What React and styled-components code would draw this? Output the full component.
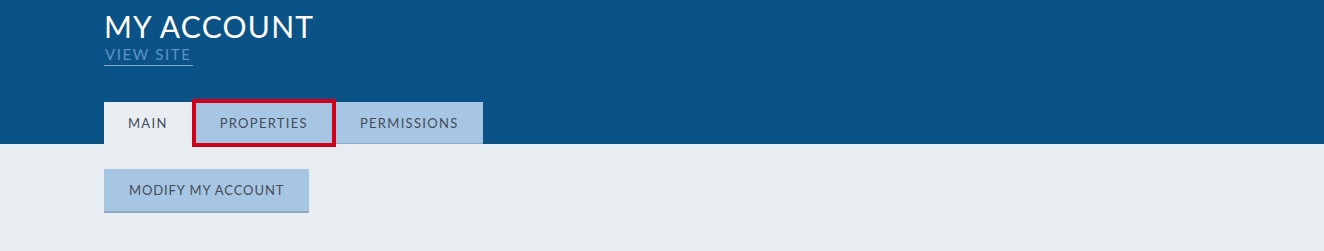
import React from "react";
import styled, { createGlobalStyle } from "styled-components";

const Global = createGlobalStyle`
  html, body {
    margin: 0;
    padding: 0;
    background: #e8edf2;
    font-family: "Lato", "Open Sans", sans-serif;
  }
  * { box-sizing: border-box; }
`;

const Header = styled.header`
  background: #0b5386;
  height: 144px;
  padding: 9px 0 0 104px;
  display: flex;
  flex-direction: column;
  align-items: flex-start;
`;

const Title = styled.h1`
  margin: 0;
  font-size: 30px;
  line-height: 35px;
  font-weight: 400;
  letter-spacing: 1.25px;
  color: #ffffff;
`;

const ViewSite = styled.a`
  display: inline-block;
  margin-top: 1px;
  font-size: 15px;
  line-height: 18px;
  letter-spacing: 1.6px;
  color: #5b93c4;
  text-decoration: none;
  border-bottom: 1px solid #7eaad2;
  padding: 0 2px 2px 1px;
`;

const TabBar = styled.nav`
  margin-top: auto;
  display: flex;
  align-items: center;
  height: 42px;
`;

const Tab = styled.div`
  position: relative;
  height: ${(p) => (p.$focused ? "48px" : "42px")};
  margin: ${(p) => (p.$focused ? "-3px 0" : "0")};
  padding: 0 24px;
  display: flex;
  align-items: center;
  font-size: 13px;
  letter-spacing: 1.3px;
  color: #444c58;
  background: ${(p) => (p.$active ? "#e8edf2" : "#a7c6e3")};
  border-bottom: ${(p) => (p.$active ? "none" : "1px solid #8fabc6")};
  border: ${(p) => (p.$focused ? "4px solid #d0021b" : undefined)};
  z-index: ${(p) => (p.$focused ? 2 : 1)};
`;

const Content = styled.main`
  padding: 25px 104px;
  min-height: 107px;
`;

const Button = styled.button`
  height: 44px;
  padding: 0 25px;
  border: none;
  border-bottom: 2px solid #8ea9c5;
  background: #a7c6e3;
  font-family: "Lato", "Open Sans", sans-serif;
  font-size: 13px;
  letter-spacing: 0.9px;
  color: #444c58;
  cursor: pointer;
`;

export default function App() {
  return (
    <>
      <Global />
      <Header>
        <Title>MY ACCOUNT</Title>
        <ViewSite href="#">VIEW SITE</ViewSite>
        <TabBar>
          <Tab $active>MAIN</Tab>
          <Tab $focused>PROPERTIES</Tab>
          <Tab>PERMISSIONS</Tab>
        </TabBar>
      </Header>
      <Content>
        <Button>MODIFY MY ACCOUNT</Button>
      </Content>
    </>
  );
}
